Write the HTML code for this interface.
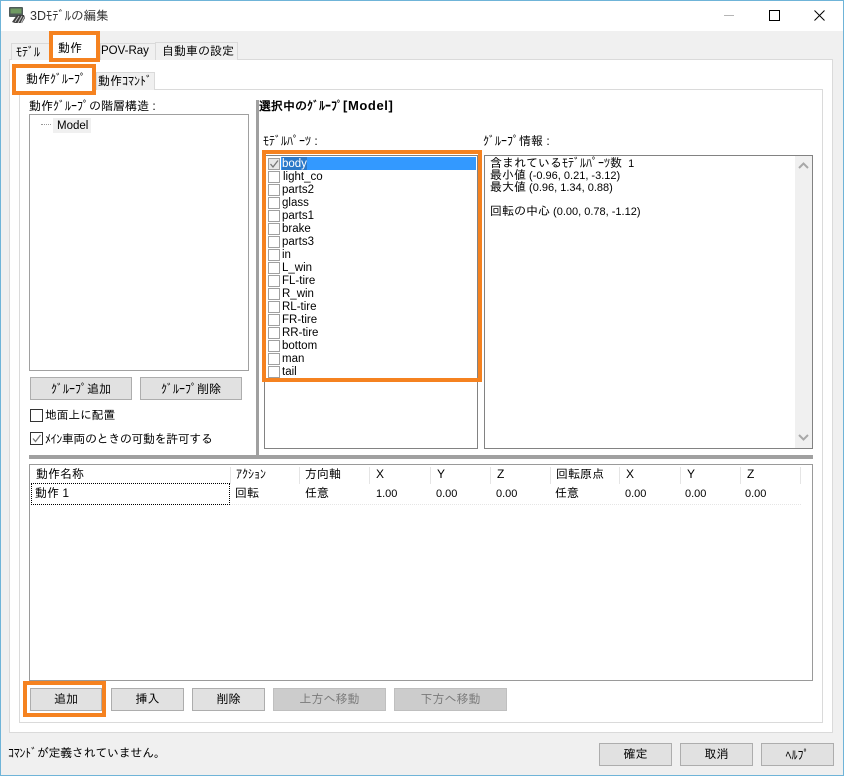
<!DOCTYPE html>
<html lang="ja">
<head>
<meta charset="utf-8">
<style>
html,body{margin:0;padding:0;background:#f0f0f0}
#w{position:relative;width:844px;height:776px;overflow:hidden;background:#f0f0f0;font:12px/14px "Liberation Sans","IPAGothic","Noto Sans CJK JP",sans-serif;color:#000}
#w div,#w svg{position:absolute;box-sizing:border-box}
.t{white-space:nowrap}
.k{font-family:"Noto Sans CJK JP","IPAGothic",sans-serif;font-weight:400}
.b{background:#e1e1e1;border:1px solid #adadad;text-align:center;line-height:21px;white-space:nowrap}
.d{background:#cccccc;border:1px solid #bfbfbf;color:#7a7a7a}
.o{border:4px solid #f58220}
.c{width:12px;height:12px;border:1px solid #a0a0a0;background:#fff}
.l{left:282px;font-size:11.5px;line-height:13px;height:13px;white-space:nowrap}
.h{top:467px;height:17px;line-height:14px;padding-left:6px;border-right:1px solid #e5e5e5;white-space:nowrap;font-size:12px}
.r{top:487px;height:16px;line-height:14px;white-space:nowrap;font-size:11px}
.j{font-size:12px}
.r.j{top:486px}
.i{left:490px;height:12px;line-height:12px;font-size:11px;white-space:nowrap}
</style>
</head>
<body>
<div id="w">
<!-- window frame and title bar -->
<div style="left:0;top:0;width:844px;height:31px;background:#fff"></div>
<div style="left:0;top:0;width:844px;height:1px;background:#6fb4d8"></div>
<div style="left:0;top:0;width:1px;height:776px;background:#6fb4d8"></div>
<div style="left:843px;top:0;width:1px;height:776px;background:#6fb4d8"></div>
<div style="left:0;top:775px;width:844px;height:1px;background:#6fb4d8"></div>
<svg style="left:9px;top:7px" width="17" height="17" viewBox="0 0 17 17">
<rect x="0" y="0" width="14" height="10" rx="1" fill="#4f5a58"/><rect x="1.500" y="1.500" width="11" height="5" fill="#6f9a62"/>
<path d="M3 15L8 8h7l1 3-3 5H6z" fill="#3f3f3f"/><path d="M6 15l4-6M9 16l4-7M12 16l3-6" stroke="#c4c4c4" fill="none"/>
</svg>
<div class="t" style="left:30px;top:7px;font-size:12.500px;line-height:15px;color:#333">3D<span class="k">ﾓﾃﾞﾙ</span>の編集</div>
<div style="left:724px;top:15px;width:10px;height:1px;background:#b5b5b5"></div>
<div style="left:769px;top:10px;width:11px;height:11px;border:1px solid #000"></div>
<svg style="left:814px;top:10px" width="11" height="11" viewBox="0 0 11 11"><path d="M.5.5l10 10M10.500.5l-10 10" stroke="#000" stroke-width="1" fill="none"/></svg>

<!-- outer tabs -->
<div style="left:9px;top:59px;width:824px;height:674px;background:#fff;border:1px solid #dadada"></div>
<div class="t" style="left:11px;top:43px;width:39px;height:17px;background:#f0f0f0;border:1px solid #dadada;border-bottom:0;padding:1px 0 0 4px"><span class="k">ﾓﾃﾞﾙ</span></div>
<div class="t" style="left:100px;top:43px;width:56px;height:17px;background:#f0f0f0;border:1px solid #dadada;border-bottom:0;padding:0;font-size:11.500px">POV-Ray</div>
<div class="t" style="left:155px;top:42px;width:83px;height:18px;background:#f0f0f0;border:1px solid #dadada;border-bottom:0;padding:1px 0 0 6px">自動車の設定</div>
<div style="left:53px;top:35px;width:43px;height:25px;background:#fff"></div>
<div class="t" style="left:58px;top:41px">動作</div>
<div class="o" style="left:49px;top:31px;width:51px;height:31px"></div>

<!-- inner tabs -->
<div style="left:19px;top:89px;width:804px;height:634px;background:#fff;border:1px solid #dadada"></div>
<div class="t" style="left:96px;top:72px;width:59px;height:18px;background:#f0f0f0;border:1px solid #dadada;border-bottom:0;padding:1px 0 0 1px">動作<span class="k">ｺﾏﾝﾄﾞ</span></div>
<div style="left:16px;top:68px;width:76px;height:23px;background:#fff"></div>
<div class="t" style="left:26px;top:72px">動作<span class="k">ｸﾞﾙｰﾌﾟ</span></div>
<div class="o" style="left:12px;top:64px;width:84px;height:31px"></div>

<!-- left tree column -->
<div class="t" style="left:29px;top:99px">動作<span class="k">ｸﾞﾙｰﾌﾟ</span>の階層構造 :</div>
<div style="left:29px;top:114px;width:220px;height:257px;border:1px solid #a0a0a0;background:#fff"></div>
<div style="left:41px;top:124px;width:10px;height:1px;border-top:1px dotted #999"></div>
<div style="left:53px;top:118px;width:38px;height:15px;background:#f0f0f0"></div>
<div class="t" style="left:57px;top:119px;font-size:11.500px">Model</div>
<div class="b" style="left:30px;top:377px;width:102px;height:23px"><span class="k">ｸﾞﾙｰﾌﾟ</span>追加</div>
<div class="b" style="left:140px;top:377px;width:102px;height:23px"><span class="k">ｸﾞﾙｰﾌﾟ</span>削除</div>
<div class="c" style="left:30px;top:409px;width:13px;height:13px;border-color:#333"></div>
<div class="t" style="left:45px;top:409px;font-size:11.700px">地面上に配置</div>
<div class="c" style="left:30px;top:432px;width:13px;height:13px;border-color:#333"></div>
<svg style="left:30px;top:432px" width="13" height="13" viewBox="0 0 13 13"><path d="M3 6.500l2.500 3L10.500 3" stroke="#777" stroke-width="1.300" fill="none"/></svg>
<div class="t" style="left:45px;top:432px;letter-spacing:-.4px"><span class="k">ﾒｲﾝ</span>車両のときの可動を許可する</div>

<!-- splitters -->
<div style="left:256px;top:100px;width:3px;height:355px;background:#a0a0a0"></div>
<div style="left:29px;top:455px;width:784px;height:4px;background:#a0a0a0"></div>

<!-- right top -->
<div class="t" style="left:259px;top:99px;font-weight:bold;font-size:12px">選択中の<span class="k" style="font-weight:700">ｸﾞﾙｰﾌﾟ</span><span style="font-size:13px;letter-spacing:.6px">[Model]</span></div>
<div class="t" style="left:263px;top:134px"><span class="k">ﾓﾃﾞﾙﾊﾟｰﾂ</span> :</div>
<div class="t" style="left:483px;top:134px"><span class="k">ｸﾞﾙｰﾌﾟ</span>情報 :</div>
<div style="left:264px;top:155px;width:214px;height:294px;border:1px solid #828282;background:#fff"></div>
<div style="left:281px;top:157px;width:195px;height:13px;background:#3399ff"></div>
<div style="left:282px;top:157px;width:25px;height:13px;background:#2a78c8"></div>

<div class="c" style="left:268px;top:158px;background:#e8e8e8"></div>
<svg style="left:268px;top:158px" width="12" height="12" viewBox="0 0 12 12"><path d="M2.500 6l2.500 3L10 2.500" stroke="#777" stroke-width="1.300" fill="none"/></svg>
<div class="c" style="left:268px;top:171px"></div>
<div class="c" style="left:268px;top:184px"></div>
<div class="c" style="left:268px;top:197px"></div>
<div class="c" style="left:268px;top:210px"></div>
<div class="c" style="left:268px;top:223px"></div>
<div class="c" style="left:268px;top:236px"></div>
<div class="c" style="left:268px;top:249px"></div>
<div class="c" style="left:268px;top:262px"></div>
<div class="c" style="left:268px;top:275px"></div>
<div class="c" style="left:268px;top:288px"></div>
<div class="c" style="left:268px;top:301px"></div>
<div class="c" style="left:268px;top:314px"></div>
<div class="c" style="left:268px;top:327px"></div>
<div class="c" style="left:268px;top:340px"></div>
<div class="c" style="left:268px;top:353px"></div>
<div class="c" style="left:268px;top:366px"></div>

<div class="l" style="top:158px;color:#fff">body</div>
<div class="l" style="top:171px;left:283px">light_co</div>
<div class="l" style="top:184px">parts2</div>
<div class="l" style="top:197px">glass</div>
<div class="l" style="top:210px">parts1</div>
<div class="l" style="top:223px">brake</div>
<div class="l" style="top:236px">parts3</div>
<div class="l" style="top:249px">in</div>
<div class="l" style="top:262px">L_win</div>
<div class="l" style="top:275px">FL-tire</div>
<div class="l" style="top:288px">R_win</div>
<div class="l" style="top:301px">RL-tire</div>
<div class="l" style="top:314px">FR-tire</div>
<div class="l" style="top:327px">RR-tire</div>
<div class="l" style="top:340px">bottom</div>
<div class="l" style="top:353px">man</div>
<div class="l" style="top:366px">tail</div>
<div class="o" style="left:262px;top:150px;width:220px;height:232px"></div>

<div style="left:484px;top:155px;width:329px;height:294px;border:1px solid #828282;background:#fff"></div>
<div style="left:795px;top:156px;width:17px;height:292px;background:#f0f0f0"></div>
<svg style="left:798px;top:161px" width="11" height="9" viewBox="0 0 11 9"><path d="M1 7l4.500-4.500L10 7" stroke="#a8a8a8" stroke-width="2" fill="none"/></svg>
<svg style="left:798px;top:433px" width="11" height="9" viewBox="0 0 11 9"><path d="M1 2l4.500 4.500L10 2" stroke="#a8a8a8" stroke-width="2" fill="none"/></svg>
<div class="i" style="top:157px"><span class="j">含まれている</span><span class="k" style="font-size:12px">ﾓﾃﾞﾙﾊﾟｰﾂ</span><span class="j">数</span>&nbsp;&nbsp;1</div>
<div class="i" style="top:169px"><span class="j">最小値</span> (-0.96, 0.21, -3.12)</div>
<div class="i" style="top:181px"><span class="j">最大値</span> (0.96, 1.34, 0.88)</div>
<div class="i" style="top:205px"><span class="j">回転の中心</span> (0.00, 0.78, -1.12)</div>

<!-- table -->
<div style="left:29px;top:464px;width:784px;height:217px;border:1px solid #9a9a9a;background:#fff"></div>
<div class="h" style="left:30px;width:201px">動作名称</div>
<div class="h" style="left:231px;width:69px;padding-left:5px"><span class="k">ｱｸｼｮﾝ</span></div>
<div class="h" style="left:300px;width:70px;padding-left:5px">方向軸</div>
<div class="h" style="left:370px;width:61px">X</div>
<div class="h" style="left:431px;width:60px">Y</div>
<div class="h" style="left:491px;width:60px">Z</div>
<div class="h" style="left:551px;width:69px;padding-left:5px">回転原点</div>
<div class="h" style="left:620px;width:61px">X</div>
<div class="h" style="left:681px;width:60px">Y</div>
<div class="h" style="left:741px;width:60px">Z</div>
<div style="left:31px;top:483px;width:199px;height:22px;border:1px dotted #000"></div>
<div style="left:230px;top:504px;width:571px;height:1px;border-top:1px dotted #e5e5e5"></div>
<div class="r j" style="left:35px">動作 1</div>
<div class="r j" style="left:235px">回転</div>
<div class="r j" style="left:305px">任意</div>
<div class="r" style="left:376px">1.00</div>
<div class="r" style="left:436px">0.00</div>
<div class="r" style="left:496px">0.00</div>
<div class="r j" style="left:555px">任意</div>
<div class="r" style="left:625px">0.00</div>
<div class="r" style="left:685px">0.00</div>
<div class="r" style="left:745px">0.00</div>

<!-- buttons under table -->
<div class="b" style="left:30px;top:688px;width:72px;height:23px">追加</div>
<div class="o" style="left:23px;top:681px;width:83px;height:36px"></div>
<div class="b" style="left:111px;top:688px;width:73px;height:23px">挿入</div>
<div class="b" style="left:192px;top:688px;width:73px;height:23px">削除</div>
<div class="b d" style="left:273px;top:688px;width:113px;height:23px">上方へ移動</div>
<div class="b d" style="left:394px;top:688px;width:113px;height:23px">下方へ移動</div>

<!-- status and footer -->
<div class="t" style="left:8px;top:746px;letter-spacing:-.3px"><span class="k">ｺﾏﾝﾄﾞ</span>が定義されていません。</div>
<div class="b" style="left:599px;top:743px;width:73px;height:23px">確定</div>
<div class="b" style="left:680px;top:743px;width:73px;height:23px">取消</div>
<div class="b" style="left:761px;top:743px;width:73px;height:23px"><span class="k">ﾍﾙﾌﾟ</span></div>
</div>
</body>
</html>
